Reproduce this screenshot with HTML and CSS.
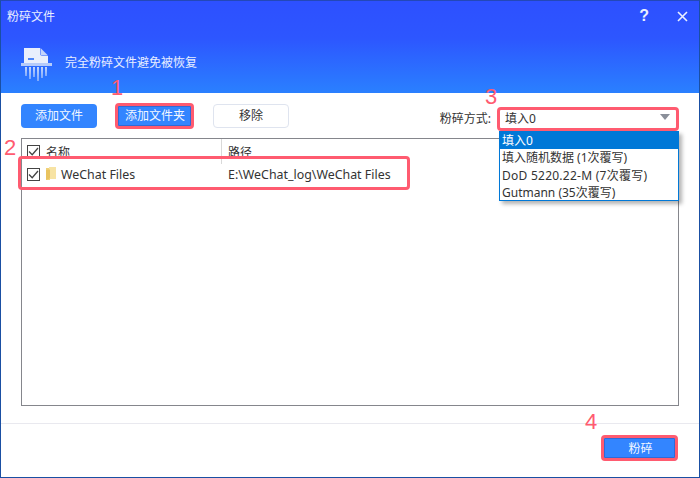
FILE: index.html
```html
<!DOCTYPE html>
<html lang="zh">
<head>
<meta charset="utf-8">
<title>粉碎文件</title>
<link rel="stylesheet" href="styles.css">
</head>
<body>
<div class="window">
  <header class="header">
    <div class="titlebar">
      <span class="title">粉碎文件</span>
      <div class="winctl">
        <span class="help">?</span>
        <svg class="close" width="11" height="11" viewBox="0 0 11 11"><path d="M1 1l9 9M10 1l-9 9" stroke="#eaf0ff" stroke-width="1.6" fill="none"/></svg>
      </div>
    </div>
    <div class="banner">
      <svg class="logo" width="34" height="36" viewBox="0 0 34 36">
        <defs>
          <linearGradient id="fade" x1="0" y1="0" x2="0" y2="1">
            <stop offset="0" stop-color="#c3d6fd"/>
            <stop offset="1" stop-color="#7fa9fb"/>
          </linearGradient>
        </defs>
        <path d="M4 1h16v5.500c0 1.500 1 2.500 2.500 2.500H28v7H4z" fill="#e9effc"/>
        <path d="M20.500 1L28 8.500h-6c-.9 0-1.500-.6-1.500-1.500z" fill="#c3d4fb"/>
        <rect x="8" y="11" width="6" height="2" fill="#4f86f7"/>
        <rect x="1" y="16" width="31" height="3" fill="#b5cbfa"/>
        <g fill="url(#fade)">
          <rect x="5" y="20" width="2" height="9"/><rect x="9" y="20" width="2" height="12"/><rect x="13" y="20" width="2" height="10"/><rect x="17" y="20" width="2" height="14"/><rect x="21" y="20" width="2" height="11"/><rect x="25" y="20" width="2" height="9"/>
        </g>
      </svg>
      <span class="subtitle">完全粉碎文件避免被恢复</span>
    </div>
  </header>

  <main class="body">
    <div class="toolbar">
      <button class="btn primary">添加文件</button>
      <button class="btn primary folder">添加文件夹</button>
      <button class="btn ghost">移除</button>
      <div class="method">
        <span class="method-label">粉碎方式:</span>
        <div class="select">
          <span>填入0</span>
          <i class="caret"></i>
        </div>
      </div>
    </div>

    <div class="table">
      <div class="thead">
        <div class="col-name"><span class="check"><svg width="11" height="11" viewBox="0 0 11 11"><path d="M1 5.500l3.200 3.200L10 2" stroke="#444" stroke-width="1.300" fill="none"/></svg></span><span>名称</span></div>
        <div class="col-path">路径</div>
      </div>
      <div class="row">
        <div class="col-name"><span class="check"><svg width="11" height="11" viewBox="0 0 11 11"><path d="M1 5.500l3.200 3.200L10 2" stroke="#444" stroke-width="1.300" fill="none"/></svg></span>
          <svg class="folder-icon" width="10" height="14" viewBox="0 0 10 14"><path d="M0 1h3l1 1v11H0z" fill="#f1d27a"/><path d="M3 0h7v12H3z" fill="#f7e3a4"/><path d="M0 13l4-1.500V2.500L0 3z" fill="#e9c35f"/></svg>
          <span>WeChat Files</span></div>
        <div class="col-path">E:\WeChat_log\WeChat Files</div>
      </div>
    </div>
  </main>

  <footer class="footer">
    <button class="btn primary shred">粉碎</button>
  </footer>

  <ul class="dropdown">
    <li class="active">填入0</li>
    <li>填入随机数据 (1次覆写)</li>
    <li class="wide">DoD 5220.22-M (7次覆写)</li>
    <li>Gutmann (35次覆写)</li>
  </ul>

  <div class="mark mark-folder"></div>
  <div class="mark mark-row"></div>
  <div class="mark mark-select"></div>
  <div class="mark mark-shred"></div>
  <span class="num num1">1</span>
  <span class="num num2">2</span>
  <span class="num num3">3</span>
  <span class="num num4">4</span>
</div>
</body>
</html>
```
FILE: styles.css
```css
* { box-sizing: border-box; }
html, body { margin: 0; padding: 0; background: #fff; }
body { font-family: "Noto Sans", "Noto Sans CJK SC", sans-serif; font-size: 12px; color: #333; }
.window {
  position: relative;
  width: 700px;
  height: 478px;
  border: 1px solid #1a4fa3;
  border-top-color: #2348b8;
  display: flex;
  flex-direction: column;
  background: #fff;
  overflow: hidden;
}
.header {
  height: 92px;
  flex: none;
  color: #fff;
  background: linear-gradient(180deg, #2d50ff 0%, #2d56ff 40%, #2a80ff 100%);
}
.titlebar {
  height: 30px;
  padding: 0 11px 0 6px;
  display: flex;
  align-items: center;
  justify-content: space-between;
}
.title { font-size: 12px; color: #e8eeff; }
.winctl { display: flex; align-items: center; gap: 28px; }
.help { font-family: "Liberation Sans", sans-serif; font-size: 16px; font-weight: 700; color: #eaf0ff; }
.banner { display: flex; align-items: flex-start; padding: 16px 0 0 19px; gap: 11px; }
.logo { flex: none; }
.subtitle { font-size: 12px; color: #e8eeff; margin-top: 6px; }

.body { flex: 1; display: flex; flex-direction: column; padding: 11px 20px 0 20px; }
.toolbar { display: flex; align-items: center; height: 24px; }
.btn {
  font-family: inherit;
  font-size: 12px;
  height: 24px;
  padding: 0;
  border-radius: 4px;
  border: 1px solid transparent;
  line-height: 1;
}
.primary { background: #3385ff; color: #f2f7ff; }
.btn.primary { width: 76px; }
.btn.folder { margin-left: 20px; }
.ghost { width: 76px; margin-left: 20px; background: #fff; color: #333; border-color: #dfe4ef; }
.method { margin-left: auto; display: flex; align-items: center; gap: 7px; padding-top: 4px; }
.method-label { font-size: 12px; }
.select {
  width: 181px;
  height: 20px;
  padding: 0 9px 0 7px;
  display: flex;
  align-items: center;
  justify-content: space-between;
  font-size: 12px;
}
.caret { width: 0; height: 0; border-left: 5px solid transparent; border-right: 5px solid transparent; border-top: 6px solid #8a8f99; position: relative; top: -1px; }

.table {
  margin-top: 10px;
  height: 268px;
  border: 1px solid #85868c;
}
.thead { display: flex; height: 25px; align-items: center; }
.row { display: flex; height: 20px; align-items: center; font-size: 12.400px; }
.col-name { width: 199px; display: flex; align-items: center; padding-left: 5px; flex: none; }
.thead .col-path { border-left: 1px solid #d9d9d9; align-self: stretch; display: flex; align-items: center; padding-left: 6px; }
.row .col-path { padding-left: 7px; color: #333; }
.check {
  width: 13px;
  height: 13px;
  border: 1px solid #444;
  display: inline-flex;
  align-items: center;
  justify-content: center;
  margin-right: 6px;
  background: #fff;
}
.folder-icon { margin-right: 5px; }

.footer {
  margin-top: 17px;
  height: 55px;
  flex: none;
  border-top: 1px solid #e9e9ef;
  display: flex;
  justify-content: flex-end;
  align-items: flex-start;
  padding: 12px 22px 0 0;
}
.btn.shred { width: 73px; height: 25px; }

.dropdown {
  position: absolute;
  left: 498px;
  top: 130px;
  width: 180px;
  height: 70px;
  margin: 0;
  padding: 0;
  list-style: none;
  background: #fff;
  border: 1px solid #0078d7;
  box-shadow: 3px 3px 4px rgba(0,0,0,.3);
  font-size: 12px;
  color: #333;
}
.dropdown li { height: 17.250px; line-height: 17px; padding-left: 2px; white-space: nowrap; }
.dropdown .active { background: #0078d7; color: #fff; }
.dropdown .wide { letter-spacing: .25px; }

.mark { position: absolute; border: 3px solid #ff5b70; border-radius: 4px; }
.mark-folder { left: 114px; top: 102px; width: 79px; height: 26px; box-shadow: inset 0 0 0 1px #2f6ad8; }
.mark-row { left: 17px; top: 155px; width: 392px; height: 34px; }
.mark-select { left: 496px; top: 106px; width: 182px; height: 24px; }
.mark-shred { left: 600px; top: 434px; width: 77px; height: 26px; box-shadow: inset 0 0 0 1px #2f6ad8; }
.num { position: absolute; color: #ff5b70; font-family: "Liberation Sans", sans-serif; font-size: 22px; line-height: 22px; }
.num1 { left: 110px; top: 76px; }
.num2 { left: 3px; top: 136px; }
.num3 { left: 484px; top: 85px; }
.num4 { left: 584px; top: 410px; }
```
